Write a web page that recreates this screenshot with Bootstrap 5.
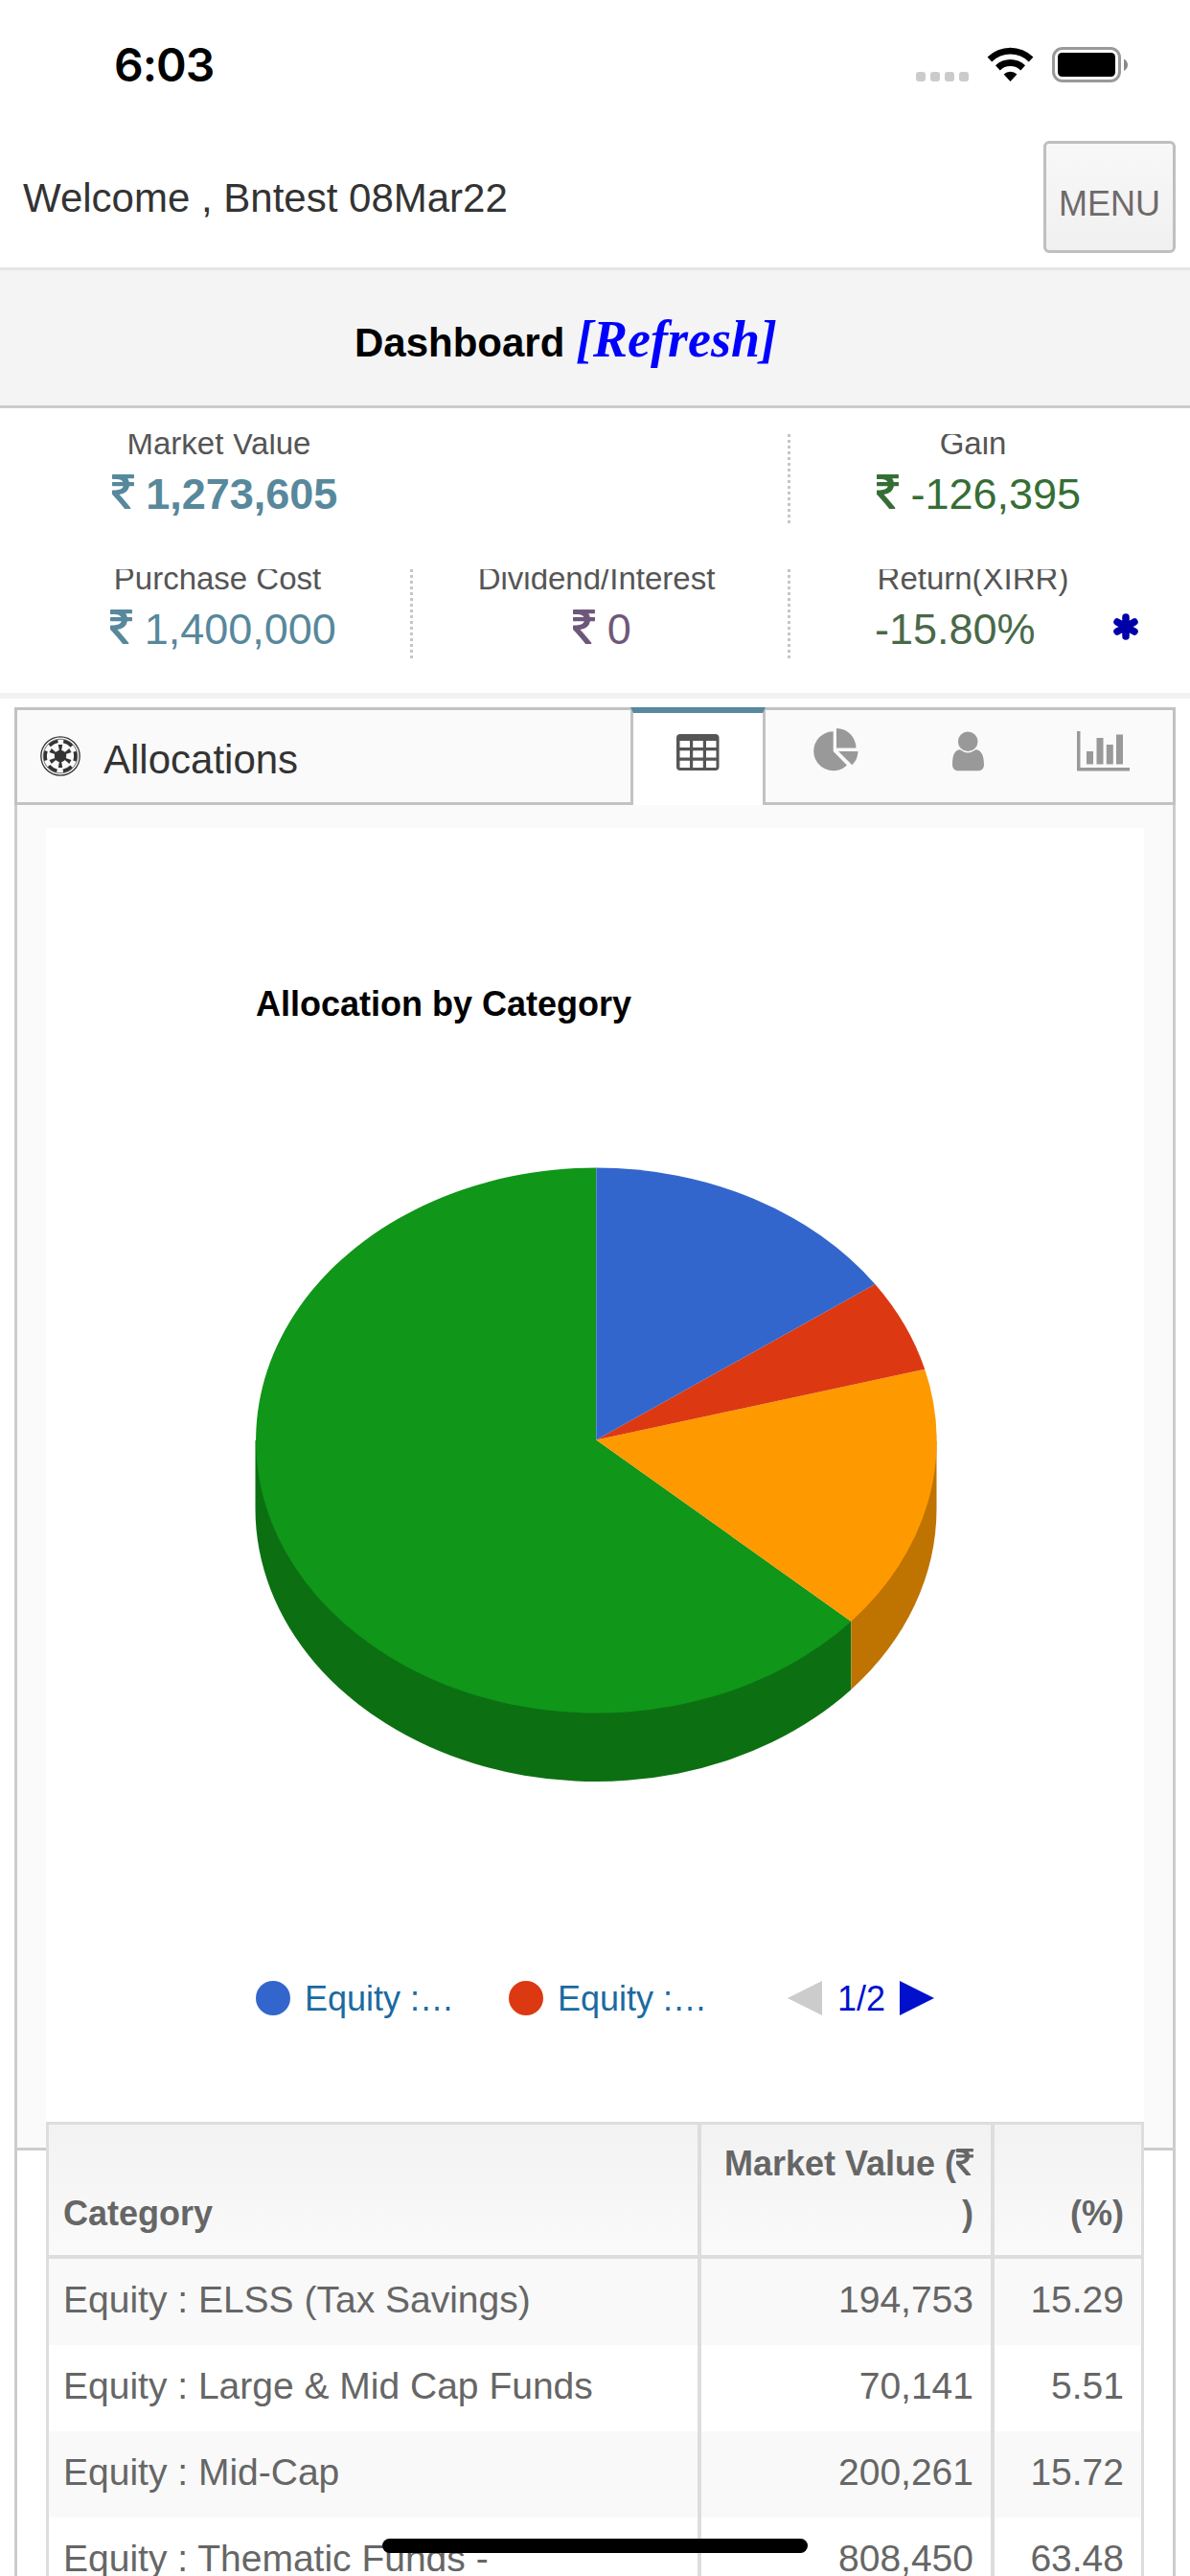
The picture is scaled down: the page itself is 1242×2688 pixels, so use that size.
<!DOCTYPE html>
<html lang="en">
<head>
    <meta charset="UTF-8">
    <meta name="viewport" content="width=device-width, initial-scale=1.0">
    <title>Dashboard</title>
    <link href="https://cdn.jsdelivr.net/npm/bootstrap@5.3.2/dist/css/bootstrap.min.css" rel="stylesheet">
    <style>
        body { font-family: "Liberation Sans", Arial, sans-serif; background: #fff; color: #333; height: 2688px; overflow: hidden; }
        svg { display: block; flex: none; }

        .status-bar { height: 129px; padding: 7px 64px 0 119px; }
        .clock { font: 600 48px/1 Inter, sans-serif; color: #000; letter-spacing: -1px; }
        .top-bar { height: 153px; padding: 0 15px 0 24px; border-bottom: 3px solid #e5e5e5; }
        .welcome { font-size: 42px; line-height: 60px; padding-top: 48px; }
        .menu-btn { width: 138px; height: 117px; margin-top: 18px; padding: 14px 0 0; border: 3px solid #bfbfbf; border-radius: 6px; background: linear-gradient(#f8f8f8, #f0f0f0); color: #6f6a69; font-size: 36px; line-height: 1; }
        .title-bar { height: 144px; padding: 42px 0 0 370px; background: #f4f4f4; border-bottom: 3px solid #ccc; color: #000; font-size: 42px; line-height: 60px; }
        .title-bar a { color: #00f; font: italic 700 54px/60px "Liberation Serif", "Times New Roman", serif; }

        .stats { height: 303px; padding: 27px 28px 0 34px; border-bottom: 6px solid #f2f2f2; }
        .stats-row { height: 93px; margin-bottom: 48px; }
        .stat { overflow: hidden; text-align: center; white-space: nowrap; }
        .stat-a { width: 397px; }
        .stat-b { width: 394px; }
        .stat-c { width: 389px; }
        /* 3px dots, 6px pitch */
        .dotted { background: repeating-linear-gradient(#c6c6c6 0 3px, transparent 3px 6px) right top / 3px 100% no-repeat; padding-right: 3px; }
        .stat-label { font-size: 33px; line-height: 19px; height: 19px; padding-right: 8px; color: #555; }
        .stat-value { font-size: 45px; line-height: 60px; margin-top: 14px; padding-left: 4px; }
        .stat-value svg { display: inline-block; vertical-align: baseline; }
        .blue { color: #57889c; }
        .purple { color: #6e587a; }
        .green { color: #356e35; }
        .moss { color: #496949; padding-left: 88px; }
        .stat-value .star { margin-left: 80px; margin-top: 13px; }

        .panel { margin: 9px 15px 0; }
        .panel-head { height: 102px; border: 3px solid #c2c2c2; background: #fafafa; }
        .panel-name { flex: none; width: 640px; padding-left: 24px; font-size: 42px; line-height: 60px; }
        .panel-tab { flex: none; height: 99px; margin-top: -3px; border: 3px solid transparent; }
        .panel-tab.on { width: 141px; height: 102px; border: solid #c2c2c2; border-width: 0 3px; border-top: 6px solid #57889c; background: #fff; }
        .panel-body { height: 1950px; border: solid #ccc; border-width: 0 3px; }
        .pane { height: 1404px; padding: 24px 30px 0; background: #fafafa; border-bottom: 3px solid #ccc; }
        .chart { background: #fff; }

        .alloc { position: relative; width: 1146px; table-layout: fixed; border: 3px solid #ddd; border-collapse: separate; border-spacing: 0; background: #fff; color: #666; font-size: 39px; line-height: 56px; --bs-table-bg: transparent; }
        .alloc > :not(caption) > * > * { border: 0; border-right: 4px solid #ddd; color: #666; text-align: right; box-shadow: none; }
        .alloc > :not(caption) > * > :last-child { border-right: 0; }
        .alloc > thead > tr > th { height: 140px; padding: 15px 18px 18px; border-bottom: 4px solid #ddd; background: linear-gradient(#f2f2f2, #fafafa); font-size: 36px; line-height: 51.4px; vertical-align: bottom; }
        .alloc > tbody > tr > td { height: 90px; padding: 15px 18px 19px; }
        .alloc > :not(caption) > tr > :first-child { text-align: left; padding-left: 15px; }
        .alloc > tbody > tr:nth-child(odd) > td { background: #f9f9f9; }
        .alloc th svg { display: inline-block; vertical-align: baseline; }
        .home-bar { position: fixed; left: 399px; bottom: 24px; width: 444px; height: 15px; border-radius: 8px; background: #000; }
    </style>
</head>
<body>
<svg width="0" height="0" class="position-absolute">
    <symbol id="rupee" viewBox="0 128 898 1408" preserveAspectRatio="none">
        <path fill="currentColor" d="M898 470v102q0 14-9 23t-23 9h-168q-23 144-129 234t-276 110q167 178 459 536 14 16 4 34-8 18-29 18h-195q-16 0-25-12-306-367-498-571-9-9-9-22v-127q0-13 9.500-22.500t22.500-9.500h112q132 0 212.500-43t102.500-125h-427q-14 0-23-9t-9-23v-102q0-14 9-23t23-9h413q-57-113-268-113h-145q-13 0-22.500-9.500t-9.500-22.500v-133q0-14 9-23t23-9h832q14 0 23 9t9 23v102q0 14-9 23t-23 9h-233q47 61 64 144h171q14 0 23 9t9 23z"/>
    </symbol>
</svg>

<div class="status-bar d-flex align-items-center justify-content-between">
    <div class="clock">6:03</div>
    <svg width="222" height="40" viewBox="957 48 222 40">
        <g fill="#cbcbcb">
            <rect x="957" y="75" width="10" height="10" rx="3"/>
            <rect x="972" y="75" width="10" height="10" rx="3"/>
            <rect x="987" y="75" width="10" height="10" rx="3"/>
            <rect x="1002" y="75" width="10" height="10" rx="3"/>
        </g>
        <path d="M1031.600 59.500a34 34 0 0 1 47.800 0l-4.600 5a27 27 0 0 0-38.600 0zM1040 68.200a22.500 22.500 0 0 1 31 0l-4.700 5.200a15.500 15.500 0 0 0-21.600 0zM1048.600 77.400a10 10 0 0 1 13.800 0l-6.900 7.700z"/>
        <rect x="1100.500" y="50.500" width="69" height="34" rx="9.500" fill="none" stroke="#999" stroke-width="3"/>
        <rect x="1105" y="55" width="60" height="25" rx="4.500"/>
        <path d="M1174 61.500q4 2.500 4 6.200t-4 6.300z" fill="#888"/>
    </svg>
</div>

<header class="top-bar d-flex justify-content-between">
    <div class="welcome">Welcome , Bntest 08Mar22</div>
    <button type="button" class="menu-btn">MENU</button>
</header>

<div class="title-bar d-flex align-items-baseline"><b>Dashboard&nbsp;</b><a class="text-decoration-none" href="#">[Refresh]</a></div>

<section class="stats">
    <div class="stats-row d-flex">
        <div class="stat stat-a">
            <div class="stat-label">Market Value</div>
            <div class="stat-value blue"><svg width="23" height="36"><use href="#rupee"/></svg> <b>1,273,605</b></div>
        </div>
        <div class="stat stat-b dotted"></div>
        <div class="stat stat-c">
            <div class="stat-label">Gain</div>
            <div class="stat-value green"><svg width="23" height="36"><use href="#rupee"/></svg> -126,395</div>
        </div>
    </div>
    <div class="stats-row d-flex">
        <div class="stat stat-a dotted">
            <div class="stat-label">Purchase Cost</div>
            <div class="stat-value blue"><svg width="23" height="36"><use href="#rupee"/></svg> 1,400,000</div>
        </div>
        <div class="stat stat-b dotted">
            <div class="stat-label">Dividend/Interest</div>
            <div class="stat-value purple"><svg width="23" height="36"><use href="#rupee"/></svg> 0</div>
        </div>
        <div class="stat stat-c">
            <div class="stat-label">Return(XIRR)</div>
            <div class="stat-value moss d-flex align-items-start">
                <span>-15.80%</span>
                <svg class="star" width="28" height="28" viewBox="0 0 28 28" stroke="#0000a8" stroke-width="7.500" stroke-linecap="round"><path d="M14 4v20M5 9l18 10M5 19l18-10"/></svg>
            </div>
        </div>
    </div>
</section>

<main class="panel">
    <div class="panel-head d-flex">
        <div class="panel-name d-flex align-items-center">
            <!-- emblem -->
            <svg width="42" height="42" viewBox="-21 -21 42 42" fill="none" stroke="#333">
                <circle r="20.200" stroke-width="1.300"/>
                <circle r="17.800" stroke-width=".7"/>
                <circle r="15.800" stroke-width="3.400" stroke-dasharray="10 6.545" stroke-dashoffset="-3.300" transform="rotate(-90)"/>
                <g fill="#333" stroke="none">
                    <circle r="6.200"/>
                    <path id="spoke" d="M-2.200-12h4.400L1-5h-2z"/>
                    <use href="#spoke" transform="rotate(60)"/>
                    <use href="#spoke" transform="rotate(120)"/>
                    <use href="#spoke" transform="rotate(180)"/>
                    <use href="#spoke" transform="rotate(240)"/>
                    <use href="#spoke" transform="rotate(300)"/>
                </g>
            </svg>
            <span class="ms-4 pt-2">Allocations</span>
        </div>
        <div class="panel-tab on">
            <svg width="135" height="96" viewBox="661 744 135 96">
                <path fill="#555" fill-rule="evenodd" d="M710 766h36.500a4 4 0 0 1 4 4v30a4 4 0 0 1-4 4h-36.500a4 4 0 0 1-4-4v-30a4 4 0 0 1 4-4zM709.500 773v7h10.500v-7zM723.200 773v7h10.600v-7zM737 773v7h10.500v-7zM709.500 783.300v7.200h10.500v-7.200zM723.200 783.300v7.200h10.600v-7.200zM737 783.300v7.200h10.500v-7.200zM709.500 793.700v7.200h10.500v-7.200zM723.200 793.700v7.200h10.600v-7.200zM737 793.700v7.200h10.500v-7.200z"/>
            </svg>
        </div>
        <div class="panel-tab">
            <svg width="419" height="90" viewBox="802 741 419 90" fill="#999">
                <path d="M869.700 763.300v20.700l14.300 14.500a20.500 20.500 0 1 1-14.300-35.200zM873 760a20.700 20.700 0 0 1 20.500 20.600H873zM875 784h20.500a20.500 20.500 0 0 1-6.200 14.300z"/>
                <circle cx="1010.200" cy="773.700" r="10.300"/>
                <path d="M1002 782.300q8.200 6.400 16.400 0c6 .2 8.600 6.700 8.600 15.700 0 3.800-2.500 6.300-5.800 6.300h-21.400c-3.300 0-5.800-2.500-5.800-6.300 0-9 2-15.500 8-15.700z"/>
                <path d="M1124 763h3.500v38h51.500v3.500h-55zM1134 784h7v13.600h-7zM1144.500 770h7v27.600h-7zM1154.800 777h7v20.600h-7zM1165 766.500h7v31.100h-7z"/>
            </svg>
        </div>
    </div>
    <div class="panel-body">
        <div class="pane">
            <svg class="chart" width="1146" height="1350" viewBox="0 0 1146 1350" font-family="Liberation Sans, Arial, sans-serif" font-size="36">
                <text x="219" y="196" font-weight="700">Allocation by Category</text>
                <!-- sides -->
                <path fill="#0c7013" d="M218.500 639v71A355.500 284.500 0 0 0 840.400 898.900V827.900z"/>
                <path fill="#bf7300" d="M840.400 827.900v71A355.500 284.500 0 0 0 929.500 710V639z"/>
                <!-- slices -->
                <path fill="#109618" d="M574.300 638.500L840.400 827.900A355.500 284.500 0 1 1 574.300 354.500z"/>
                <path fill="#f90" d="M574.300 638.500L917.200 564.800A355.500 284.500 0 0 1 840.400 827.900z"/>
                <path fill="#dc3912" d="M574.300 638.500L865.300 476A355.500 284.500 0 0 1 917.200 564.800z"/>
                <path fill="#36c" d="M574.300 638.500V354.500A355.500 284.500 0 0 1 865.300 476z"/>
                <circle cx="237" cy="1221" r="18" fill="#36c"/>
                <text x="270" y="1234" fill="#1b6aa0">Equity :…</text>
                <circle cx="501" cy="1221" r="18" fill="#dc3912"/>
                <text x="534" y="1234" fill="#1b6aa0">Equity :…</text>
                <path fill="#ccc" d="M774 1221l36-18v36z"/>
                <text x="826" y="1234" fill="#01c">1/2</text>
                <path fill="#01c" d="M927 1221l-36-18v36z"/>
            </svg>
            <table class="table alloc mb-0">
                <colgroup><col width="681"><col width="306"><col width="153"></colgroup>
                <thead>
                <tr><th>Category</th><th>Market Value (<svg width="18" height="28"><use href="#rupee"/></svg><br>)</th><th>(%)</th></tr>
                </thead>
                <tbody>
                <tr><td>Equity : ELSS (Tax Savings)</td><td>194,753</td><td>15.29</td></tr>
                <tr><td>Equity : Large &amp; Mid Cap Funds</td><td>70,141</td><td>5.51</td></tr>
                <tr><td>Equity : Mid-Cap</td><td>200,261</td><td>15.72</td></tr>
                <tr><td>Equity : Thematic Funds -</td><td>808,450</td><td>63.48</td></tr>
                </tbody>
            </table>
        </div>
    </div>
</main>
<div class="home-bar"></div>

<script src="https://cdn.jsdelivr.net/npm/bootstrap@5.3.2/dist/js/bootstrap.bundle.min.js"></script>
</body>
</html>
